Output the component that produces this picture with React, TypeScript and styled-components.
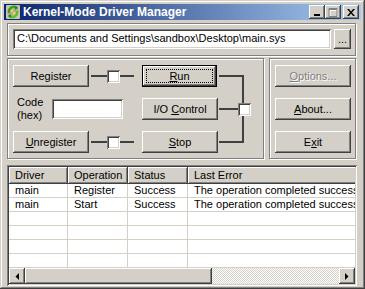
import styled, { createGlobalStyle, css } from 'styled-components'

const GlobalStyle = createGlobalStyle`
	html, body {
		margin: 0;
		padding: 0;
		background: #d4d0c8;
	}
	body {
		font-family: 'Liberation Sans', Arial, sans-serif;
		font-size: 11px;
		color: #000;
	}
`

const raised = css`
	background: #d4d0c8;
	box-shadow: inset -1px -1px #404040, inset 1px 1px #fff,
		inset -2px -2px #808080, inset 2px 2px #d4d0c8;
`

const sunken = css`
	box-shadow: inset 1px 1px #808080, inset -1px -1px #fff,
		inset 2px 2px #404040, inset -2px -2px #d4d0c8;
`

const rows = [
	{ driver: 'main', operation: 'Register', status: 'Success', error: 'The operation completed successfully.' },
	{ driver: 'main', operation: 'Start', status: 'Success', error: 'The operation completed successfully.' },
	null,
	null,
	null,
	null,
]

const App = () => {
	return (
		<>
			<GlobalStyle />
			<Window>
				<TitleBar>
					<AppIcon />
					<Title>Kernel-Mode Driver Manager</Title>
					<Controls>
						<CaptionButton>
							<svg width="8" height="7" viewBox="0 0 8 7">
								<rect x="1" y="5" width="6" height="2" fill="#000" />
							</svg>
						</CaptionButton>
						<CaptionButton>
							<svg width="10" height="9" viewBox="0 0 10 9">
								<path d="M1 0.5h8v8h-8z M1 1.5h8" fill="none" stroke="#fff" transform="translate(1 1)" />
								<path d="M1 0.5h8v8h-8z M1 1.5h8" fill="none" stroke="#808080" />
							</svg>
						</CaptionButton>
						<CloseButton>
							<svg width="8" height="7" viewBox="0 0 8 7">
								<path d="M0 0h2l2 2.5 2-2.5h2l-3 3.5 3 3.5h-2l-2-2.5-2 2.5h-2l3-3.5z" fill="#000" />
							</svg>
						</CloseButton>
					</Controls>
				</TitleBar>

				<Client>
					<GroupBox>
						<PathRow>
							<PathField>
								<span>C:\Documents and Settings\sandbox\Desktop\main.sys</span>
							</PathField>
							<BrowseButton>...</BrowseButton>
						</PathRow>
					</GroupBox>

					<MiddleRow>
						<ServiceGroup>
							<Button>
								<span>Register</span>
							</Button>
							<Connector>
								<Wire $width={16} />
								<Check />
								<Wire $width={14} />
							</Connector>
							<DefaultButton>
								<FocusRing>
									<span>
										<u>R</u>un
									</span>
								</FocusRing>
							</DefaultButton>
							<Bracket>
								<MidWire />
								<Check />
							</Bracket>

							<CodeRow>
								<CodeLabel>
									Code
									<br />
									(hex)
								</CodeLabel>
								<CodeField />
							</CodeRow>
							<Button>
								<span>
									I/O <u>C</u>ontrol
								</span>
							</Button>

							<Button>
								<span>
									<u>U</u>nregister
								</span>
							</Button>
							<Connector>
								<Wire $width={16} />
								<Check />
								<Wire $width={14} />
							</Connector>
							<Button>
								<span>
									<u>S</u>top
								</span>
							</Button>
						</ServiceGroup>

						<ActionGroup>
							<Button $disabled>
								<span>
									<u>O</u>ptions...
								</span>
							</Button>
							<Button>
								<span>
									<u>A</u>bout...
								</span>
							</Button>
							<Button>
								<span>
									E<u>x</u>it
								</span>
							</Button>
						</ActionGroup>
					</MiddleRow>

					<ListView>
						<Header>
							<HeaderCell $width={59}>Driver</HeaderCell>
							<HeaderCell $width={60}>Operation</HeaderCell>
							<HeaderCell $width={60}>Status</HeaderCell>
							<HeaderCell $width={220}>Last Error</HeaderCell>
						</Header>
						<Body>
							{rows.map((row, i) => (
								<Row key={i}>
									<Cell $width={59}>{row?.driver}</Cell>
									<Cell $width={60}>{row?.operation}</Cell>
									<Cell $width={60}>{row?.status}</Cell>
									<Cell $width={220}>{row?.error}</Cell>
								</Row>
							))}
						</Body>
						<HScroll>
							<ArrowButton>
								<svg width="4" height="7" viewBox="0 0 4 7">
									<path d="M4 0v7L0.5 3.5z" fill="#000" />
								</svg>
							</ArrowButton>
							<Thumb />
							<Track />
							<ArrowButton>
								<svg width="4" height="7" viewBox="0 0 4 7">
									<path d="M0 0v7L3.5 3.5z" fill="#000" />
								</svg>
							</ArrowButton>
						</HScroll>
					</ListView>
				</Client>
			</Window>
		</>
	)
}

const AppIcon = () => (
	<IconBox>
		<svg width="16" height="16" viewBox="0 0 16 16">
			<rect x="1" y="1" width="14" height="14" rx="1" fill="#c8c4b8" />
			<path d="M3 3h5v5H3z" fill="#e8d060" />
			<path d="M8 8h5v5H8z" fill="#e8d060" />
			<path d="M8 3h5v5H8z M3 8h5v5H3z" fill="#b0aca0" />
			<path d="M4 9a5 5 0 0 1 8-5" fill="none" stroke="#3aa020" strokeWidth="2.5" />
			<path d="M12 7a5 5 0 0 1-8 5" fill="none" stroke="#58c030" strokeWidth="2.5" />
			<path d="M10 2l3 2-3 2z M6 14l-3-2 3-2z" fill="#2a8a18" />
		</svg>
	</IconBox>
)

export default App

const Window = styled.div`
	width: 365px;
	height: 289px;
	box-sizing: border-box;
	padding: 4px;
	background: #d4d0c8;
	box-shadow: inset -1px -1px #404040, inset 1px 1px #d4d0c8,
		inset -2px -2px #808080, inset 2px 2px #fff;
	display: flex;
	flex-direction: column;
`

const TitleBar = styled.div`
	height: 18px;
	display: flex;
	align-items: center;
	padding: 0 2px 0 1px;
	background: linear-gradient(to right, #0a246a, #a6caf0);
	color: #fff;
`

const IconBox = styled.div`
	width: 16px;
	height: 16px;
	display: flex;
`

const Title = styled.div`
	flex: 1;
	margin-left: 2px;
	font-weight: bold;
	font-size: 12px;
	white-space: nowrap;
`

const Controls = styled.div`
	display: flex;
	align-items: center;
`

const CaptionButton = styled.div`
	${raised}
	width: 16px;
	height: 14px;
	display: flex;
	align-items: center;
	justify-content: center;
`

const CloseButton = styled(CaptionButton)`
	margin-left: 2px;
`

const Client = styled.div`
	flex: 1;
	display: flex;
	flex-direction: column;
	padding: 3px 4px 2px 3px;
`

const GroupBox = styled.div`
	border: 1px solid #808080;
	box-shadow: inset 1px 1px #fff, 1px 1px #fff;
	box-sizing: border-box;
	height: 33px;
	margin-right: 1px;
	padding: 5px 4px 0 5px;
`

const PathRow = styled.div`
	display: flex;
	gap: 3px;
`

const fieldBase = css`
	${sunken}
	background: #fff;
	box-sizing: border-box;
	height: 20px;
`

const PathField = styled.div`
	${fieldBase}
	flex: 1;
	padding: 3px 0 0 4px;
	white-space: nowrap;
	overflow: hidden;
`

const BrowseButton = styled.div`
	${raised}
	width: 17px;
	height: 20px;
	display: flex;
	justify-content: center;
	padding-top: 4px;
	box-sizing: border-box;
`

const MiddleRow = styled.div`
	display: flex;
	gap: 5px;
	margin-top: 2px;
	height: 101px;
`

const ServiceGroup = styled(GroupBox)`
	height: 101px;
	width: 257px;
	margin-right: 0;
	padding: 6px 0 0 5px;
	display: grid;
	grid-template-columns: 76px 53px 75px 28px;
	grid-template-rows: 22px 22px 22px;
	row-gap: 11px;
	align-content: start;
`

const ActionGroup = styled(GroupBox)`
	height: 101px;
	flex: 1;
	padding: 6px 0 0 5px;
	display: flex;
	flex-direction: column;
	gap: 11px;
`

const Button = styled.div<{ $disabled?: boolean }>`
	${raised}
	width: 76px;
	height: 22px;
	box-sizing: border-box;
	display: flex;
	align-items: center;
	justify-content: center;
	white-space: nowrap;
	color: ${(p) => (p.$disabled ? '#808080' : '#000')};
	text-shadow: ${(p) => (p.$disabled ? '1px 1px #fff' : 'none')};
`

const DefaultButton = styled(Button)`
	width: 75px;
	box-shadow: inset 0 0 0 1px #000, inset -2px -2px #404040, inset 2px 2px #fff,
		inset -3px -3px #808080;
	padding: 4px;
`

const FocusRing = styled.div`
	flex: 1;
	align-self: stretch;
	display: flex;
	align-items: center;
	justify-content: center;
	outline: 1px dotted #000;
	outline-offset: -1px;
`

const Connector = styled.div`
	display: flex;
	align-items: center;
	padding-left: 2px;
`

const Wire = styled.div<{ $width: number }>`
	width: ${(p) => p.$width}px;
	height: 2px;
	background: #404040;
`

const Check = styled.div`
	${sunken}
	background: #fff;
	width: 13px;
	height: 13px;
	flex: none;
`

const Bracket = styled.div`
	grid-column: 4;
	grid-row: 1 / 4;
	margin: 10px 0 10px 2px;
	width: 23px;
	border: 2px solid #404040;
	border-left: none;
	display: flex;
	align-items: center;
`

const MidWire = styled.div`
	width: 19px;
	height: 2px;
	flex: none;
	background: #404040;
`

const CodeRow = styled.div`
	grid-column: 1 / 3;
	display: flex;
	align-items: center;
	padding-left: 4px;
`

const CodeLabel = styled.div`
	width: 35px;
	line-height: 13px;
`

const CodeField = styled.div`
	${fieldBase}
	width: 71px;
`

const ListView = styled.div`
	${sunken}
	background: #fff;
	margin-top: 6px;
	flex: 1;
	padding: 2px;
	display: flex;
	flex-direction: column;
	overflow: hidden;
	box-sizing: border-box;
`

const Header = styled.div`
	display: flex;
	height: 17px;
	flex: none;
	overflow: hidden;
`

const HeaderCell = styled.div<{ $width: number }>`
	${raised}
	box-shadow: inset -1px -1px #404040, inset 1px 1px #fff, inset -2px -2px #808080;
	flex: none;
	width: ${(p) => p.$width}px;
	box-sizing: border-box;
	padding: 2px 0 0 6px;
	white-space: nowrap;
`

const Body = styled.div`
	flex: 1;
	overflow: hidden;
`

const Row = styled.div`
	display: flex;
	height: 14px;
	border-bottom: 1px solid #d4d0c8;
	box-sizing: border-box;
`

const Cell = styled.div<{ $width: number }>`
	flex: none;
	width: ${(p) => p.$width}px;
	box-sizing: border-box;
	border-right: 1px solid #d4d0c8;
	padding: 0 0 0 6px;
	line-height: 13px;
	white-space: nowrap;
	overflow: hidden;
`

const HScroll = styled.div`
	display: flex;
	height: 16px;
	flex: none;
`

const ArrowButton = styled.div`
	${raised}
	width: 16px;
	height: 16px;
	display: flex;
	align-items: center;
	justify-content: center;
	flex: none;
`

const Thumb = styled.div`
	${raised}
	width: 187px;
	flex: none;
`

const Track = styled.div`
	flex: 1;
	background-image: conic-gradient(#fff 25%, #d4d0c8 0 50%, #fff 0 75%, #d4d0c8 0);
	background-size: 2px 2px;
`
